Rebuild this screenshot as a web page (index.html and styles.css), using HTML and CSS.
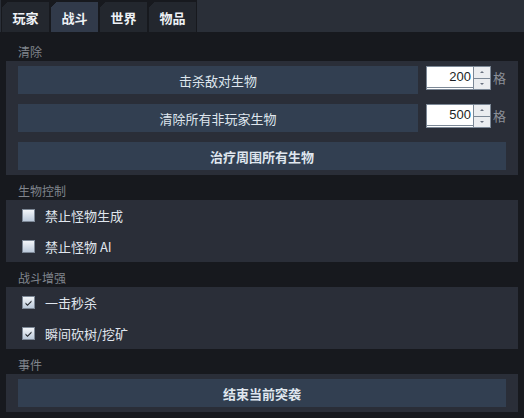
FILE: index.html
```html
<!DOCTYPE html>
<html lang="zh">
<head>
<meta charset="utf-8">
<link rel="stylesheet" href="styles.css">
</head>
<body>
<div class="app">
  <div class="tabbar">
    <div class="tab">玩家</div>
    <div class="tab active">战斗</div>
    <div class="tab">世界</div>
    <div class="tab">物品</div>
  </div>
  <div class="content">
    <div class="label first">清除</div>
    <div class="panel pad">
      <div class="row">
        <div class="btn grow">击杀敌对生物</div>
        <div class="spin">
          <div class="spin-input">200</div>
          <div class="spin-btns">
            <div class="spin-b"><span class="arr up"></span></div>
            <div class="spin-b"><span class="arr down"></span></div>
          </div>
        </div>
        <div class="unit">格</div>
      </div>
      <div class="row">
        <div class="btn grow">清除所有非玩家生物</div>
        <div class="spin">
          <div class="spin-input">500</div>
          <div class="spin-btns">
            <div class="spin-b"><span class="arr up"></span></div>
            <div class="spin-b"><span class="arr down"></span></div>
          </div>
        </div>
        <div class="unit">格</div>
      </div>
      <div class="row">
        <div class="btn grow bold">治疗周围所有生物</div>
      </div>
    </div>

    <div class="label">生物控制</div>
    <div class="panel">
      <div class="check-row"><span class="cb"></span><span class="ct">禁止怪物生成</span></div>
      <div class="check-row"><span class="cb"></span><span class="ct">禁止怪物 AI</span></div>
    </div>

    <div class="label">战斗增强</div>
    <div class="panel">
      <div class="check-row"><span class="cb on"><svg viewBox="0 0 13 13" width="13" height="13"><path d="M3.5 6.5 L5.5 8.5 L9.5 4.5 L9.5 6 L5.5 10 L3.5 8 Z" fill="#1e2228"/></svg></span><span class="ct">一击秒杀</span></div>
      <div class="check-row"><span class="cb on"><svg viewBox="0 0 13 13" width="13" height="13"><path d="M3.5 6.5 L5.5 8.5 L9.5 4.5 L9.5 6 L5.5 10 L3.5 8 Z" fill="#1e2228"/></svg></span><span class="ct">瞬间砍树/挖矿</span></div>
    </div>

    <div class="label">事件</div>
    <div class="panel pad">
      <div class="row">
        <div class="btn grow bold">结束当前突袭</div>
      </div>
    </div>
  </div>
</div>
</body>
</html>
```

FILE: styles.css
```css
* { box-sizing: border-box; }
html, body {
  margin: 0;
  padding: 0;
  background: #17191e;
}
body {
  width: 524px;
  height: 418px;
  overflow: hidden;
  font-family: "Noto Sans CJK SC", "Noto Sans", sans-serif;
  font-size: 13px;
  color: #dfe5ed;
}
.app {
  display: flex;
  flex-direction: column;
  height: 418px;
}
.tabbar {
  display: flex;
  height: 32px;
  background: #2a2f38;
  padding-left: 1px;
}
.tab {
  width: 49px;
  height: 32px;
  border: 1px solid #17191e;
  border-bottom: none;
  border-top-width: 2px;
  background: linear-gradient(135deg, #17191e 0 4px, #23272e 4px);
  color: #eef1f5;
  font-weight: bold;
  font-size: 13px;
  display: flex;
  align-items: center;
  justify-content: center;
  line-height: 1;
}
.tab.active {
  background: linear-gradient(135deg, #17191e 0 4px, #313a4a 4px);
}
.content {
  flex: 1;
  background: #17191e;
  padding: 0 6px;
}
.label {
  height: 25px;
  padding: 8px 0 0 12px;
  font-size: 12px;
  line-height: 15px;
  color: #80858d;
}
.label.first {
  height: 29px;
  padding-top: 12px;
}
.panel {
  background: #2a2e38;
}
.panel.pad {
  padding: 5px 12px;
  display: flex;
  flex-direction: column;
  gap: 10px;
}
.row {
  display: flex;
  align-items: flex-start;
}
.btn {
  height: 28px;
  background: #323f51;
  color: #dfe6ee;
  display: flex;
  align-items: center;
  justify-content: center;
  font-size: 13px;
  line-height: 1;
}
.btn.grow { flex: 1; }
.btn.bold { font-weight: bold; }
.spin {
  display: flex;
  width: 65px;
  height: 24px;
  margin-left: 8px;
}
.spin-input {
  flex: 1;
  background: #ffffff;
  border: 1px solid #7c8896;
  border-bottom: 3px double #7c8896;
  border-right: none;
  color: #1c1f24;
  font-family: "Liberation Sans", "Noto Sans", sans-serif;
  font-size: 13px;
  text-align: right;
  padding-right: 2px;
  line-height: 20px;
}
.spin-btns {
  width: 18px;
  display: flex;
  flex-direction: column;
  border: 1px solid #7c8896;
  background: #7c8896;
  gap: 1px;
}
.spin-b {
  flex: 1;
  background: #ebedf0;
  display: flex;
  align-items: center;
  justify-content: center;
}
.arr {
  width: 0;
  height: 0;
  border-left: 2px solid transparent;
  border-right: 2px solid transparent;
}
.arr.up { border-bottom: 2px solid #6a7280; }
.arr.down { border-top: 2px solid #6a7280; }
.unit {
  width: 15px;
  padding-left: 2px;
  color: #8a8f97;
  font-size: 13px;
  line-height: 24px;
}
.check-row {
  height: 31px;
  display: flex;
  align-items: center;
  padding-left: 16px;
}
.cb {
  width: 13px;
  height: 13px;
  border: 1px solid #7d8896;
  background: linear-gradient(180deg, #f2f5f9, #bccadb);
  display: flex;
  align-items: center;
  justify-content: center;
  margin-right: 10px;
  position: relative;
}
.cb svg {
  position: absolute;
  left: -1px;
  top: -1px;
}
.ct {
  color: #e0e6ee;
  font-size: 13px;
}
```
